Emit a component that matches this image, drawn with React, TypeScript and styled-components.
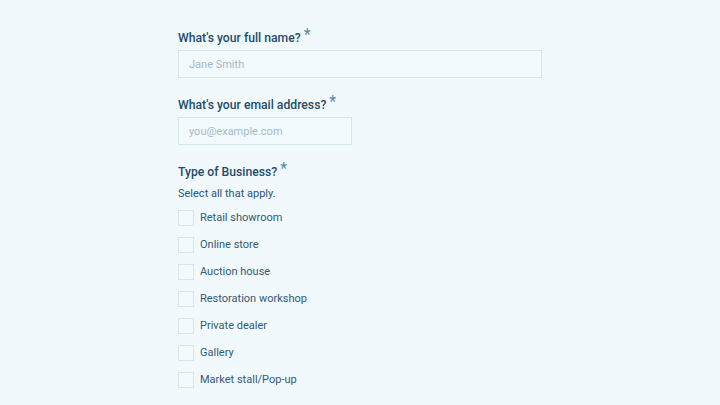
import React from "react";
import styled, { createGlobalStyle } from "styled-components";

const GlobalStyle = createGlobalStyle`
  html, body {
    margin: 0;
    padding: 0;
    background: #f1f9fd;
    font-family: Roboto, "Liberation Sans", sans-serif;
  }
`;

const Page = styled.div`
  width: 720px;
  height: 405px;
  overflow: hidden;
  background: #f1f9fd;
`;

const Form = styled.form`
  width: 364px;
  margin: 0 auto;
  padding-top: 28px;
  display: flex;
  flex-direction: column;
`;

const Field = styled.div`
  display: flex;
  flex-direction: column;
  margin-bottom: 17px;
`;

const Label = styled.label`
  font-size: 12.2px;
  font-weight: 500;
  color: #1d4c69;
  line-height: 18px;
  margin-bottom: 3px;
`;

const Star = styled.span`
  color: #5a8aa6;
  font-size: 16px;
  font-weight: 400;
  margin-left: 3px;
  position: relative;
  top: -2px;
`;

const TextInput = styled.input<{ $w?: number }>`
  box-sizing: border-box;
  width: ${(p) => (p.$w ? `${p.$w}px` : "100%")};
  height: 28px;
  border: 1px solid #d5e6ed;
  background: #f2fafd;
  padding: 0 10px;
  font-family: inherit;
  font-size: 11px;
  color: #1d4c69;
  outline: none;
  &::placeholder {
    color: #a3bac7;
  }
`;

const Hint = styled.div`
  font-size: 11px;
  color: #2c5571;
  line-height: 16px;
  margin-top: 2px;
  margin-bottom: 8px;
`;

const Options = styled.div`
  display: flex;
  flex-direction: column;
  gap: 11px;
`;

const Option = styled.label`
  display: flex;
  align-items: center;
  gap: 6px;
  font-size: 11px;
  color: #335a72;
  line-height: 16px;
`;

const Box = styled.span`
  box-sizing: border-box;
  width: 16px;
  height: 16px;
  border: 1px solid #d5e6ed;
  background: #f2fafd;
`;

const businessTypes = [
  "Retail showroom",
  "Online store",
  "Auction house",
  "Restoration workshop",
  "Private dealer",
  "Gallery",
  "Market stall/Pop-up",
];

export default function App() {
  return (
    <Page>
      <GlobalStyle />
      <Form>
        <Field>
          <Label>
            What's your full name?<Star>*</Star>
          </Label>
          <TextInput placeholder="Jane Smith" />
        </Field>
        <Field>
          <Label>
            What's your email address?<Star>*</Star>
          </Label>
          <TextInput $w={174} placeholder="you@example.com" />
        </Field>
        <Field>
          <Label>
            Type of Business?<Star>*</Star>
          </Label>
          <Hint>Select all that apply.</Hint>
          <Options>
            {businessTypes.map((t) => (
              <Option key={t}>
                <Box />
                {t}
              </Option>
            ))}
          </Options>
        </Field>
      </Form>
    </Page>
  );
}
